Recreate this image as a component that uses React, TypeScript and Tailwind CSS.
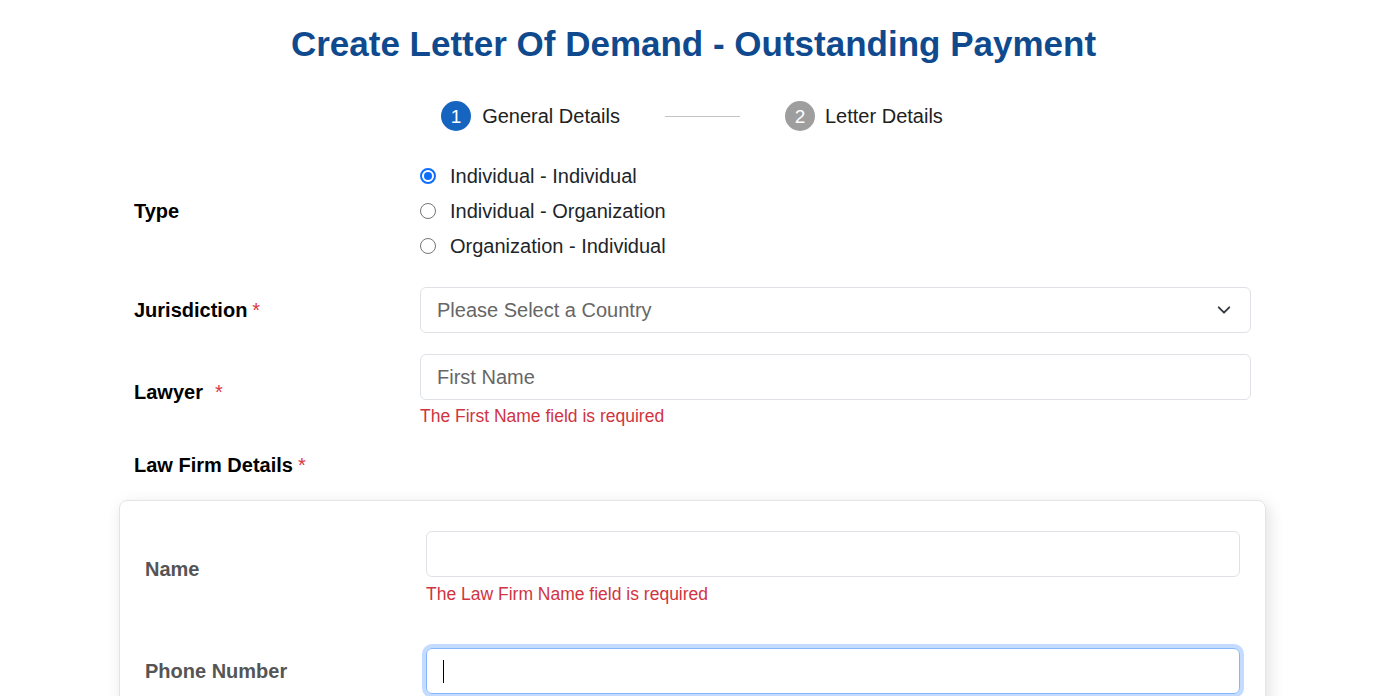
const font = "font-['Liberation_Sans',Arial,sans-serif]";

function Req() {
  return <span className="ml-[5px] font-normal text-[#dc3545]">*</span>;
}

function Radio({ label, checked }: { label: string; checked?: boolean }) {
  return (
    <label className="flex h-[35px] items-center">
      {checked ? (
        <span className="flex h-[16px] w-[16px] items-center justify-center rounded-full border-2 border-[#0d6efd] bg-white">
          <span className="h-[8px] w-[8px] rounded-full bg-[#0d6efd]" />
        </span>
      ) : (
        <span className="h-[16px] w-[16px] rounded-full border border-[#767676] bg-white" />
      )}
      <span className="ml-[14px] text-[20px] text-[#212529]">{label}</span>
    </label>
  );
}

export default function App() {
  return (
    <div className={`min-h-screen overflow-hidden bg-white ${font}`}>
      <h1 className="pr-[4px] pt-[23px] text-center text-[35px] font-bold leading-[42px] text-[#104a8e]">
        Create Letter Of Demand - Outstanding Payment
      </h1>

      {/* Stepper */}
      <div className="mt-[36px] flex items-center justify-center pr-[7px]">
        <span className="flex h-[30px] w-[30px] items-center justify-center rounded-full bg-[#1565c0] text-[19px] leading-none text-white">
          1
        </span>
        <span className="ml-[11px] text-[20px] leading-[30px] text-[#212121]">General Details</span>
        <span className="mx-[45px] h-px w-[75px] bg-[#c4c4c4]" />
        <span className="flex h-[30px] w-[30px] items-center justify-center rounded-full bg-[#9e9e9e] text-[19px] leading-none text-white">
          2
        </span>
        <span className="ml-[10px] text-[20px] leading-[30px] text-[#212121]">Letter Details</span>
      </div>

      <div className="ml-[119px] w-[1147px]">
        {/* Type */}
        <div className="mt-[27px] flex items-center px-[15px]">
          <div className="w-[286px] text-[20px] font-bold text-black">Type</div>
          <div className="flex flex-col">
            <Radio label="Individual - Individual" checked />
            <Radio label="Individual - Organization" />
            <Radio label="Organization - Individual" />
          </div>
        </div>

        {/* Jurisdiction */}
        <div className="mt-[24px] flex items-center px-[15px]">
          <div className="w-[286px] text-[20px] font-bold text-black">
            Jurisdiction
            <Req />
          </div>
          <div className="flex h-[46px] flex-1 items-center justify-between rounded-[6px] border border-[#dee2e6] pl-[16px] pr-[19px]">
            <span className="text-[20px] text-[#666]">Please Select a Country</span>
            <svg width="14" height="14" viewBox="0 0 16 16" fill="none">
              <path d="m2 5 6 6 6-6" stroke="#343a40" strokeWidth="2.2" strokeLinecap="round" strokeLinejoin="round" />
            </svg>
          </div>
        </div>

        {/* Lawyer */}
        <div className="mt-[21px] flex items-center px-[15px]">
          <div className="w-[286px] text-[20px] font-bold text-black">
            Lawyer
            <span className="ml-[12px] font-normal text-[#dc3545]">*</span>
          </div>
          <div className="flex-1">
            <div className="flex h-[46px] items-center rounded-[6px] border border-[#dee2e6] pl-[16px]">
              <span className="text-[20px] text-[#666]">First Name</span>
            </div>
            <div className="mt-[4px] text-[17.5px] leading-[25px] text-[#d0343f]">The First Name field is required</div>
          </div>
        </div>

        {/* Law Firm Details */}
        <div className="mt-[24px] px-[15px] text-[20px] font-bold leading-[24px] text-black">
          Law Firm Details
          <Req />
        </div>

        {/* Card */}
        <div className="mt-[23px] rounded-[8px] border border-[#e4e4e4] px-[25px] pb-[40px] pt-[30px] shadow-[3px_4px_16px_rgba(0,0,0,0.12)]">
          <div className="flex items-center">
            <div className="w-[281px] text-[20px] font-bold text-[#555]">Name</div>
            <div className="flex-1">
              <div className="h-[46px] rounded-[6px] border border-[#dee2e6]" />
              <div className="mt-[5px] text-[17.5px] leading-[25px] text-[#d0343f]">The Law Firm Name field is required</div>
            </div>
          </div>

          <div className="mt-[41px] flex items-center">
            <div className="w-[281px] text-[20px] font-bold text-[#555]">Phone Number</div>
            <div className="flex h-[46px] flex-1 items-center rounded-[6px] border border-[#86b7fe] pl-[16px] shadow-[0_0_0_4px_rgba(13,110,253,0.25)]">
              <span className="h-[23px] w-px bg-black" />
            </div>
          </div>
        </div>
      </div>
    </div>
  );
}
